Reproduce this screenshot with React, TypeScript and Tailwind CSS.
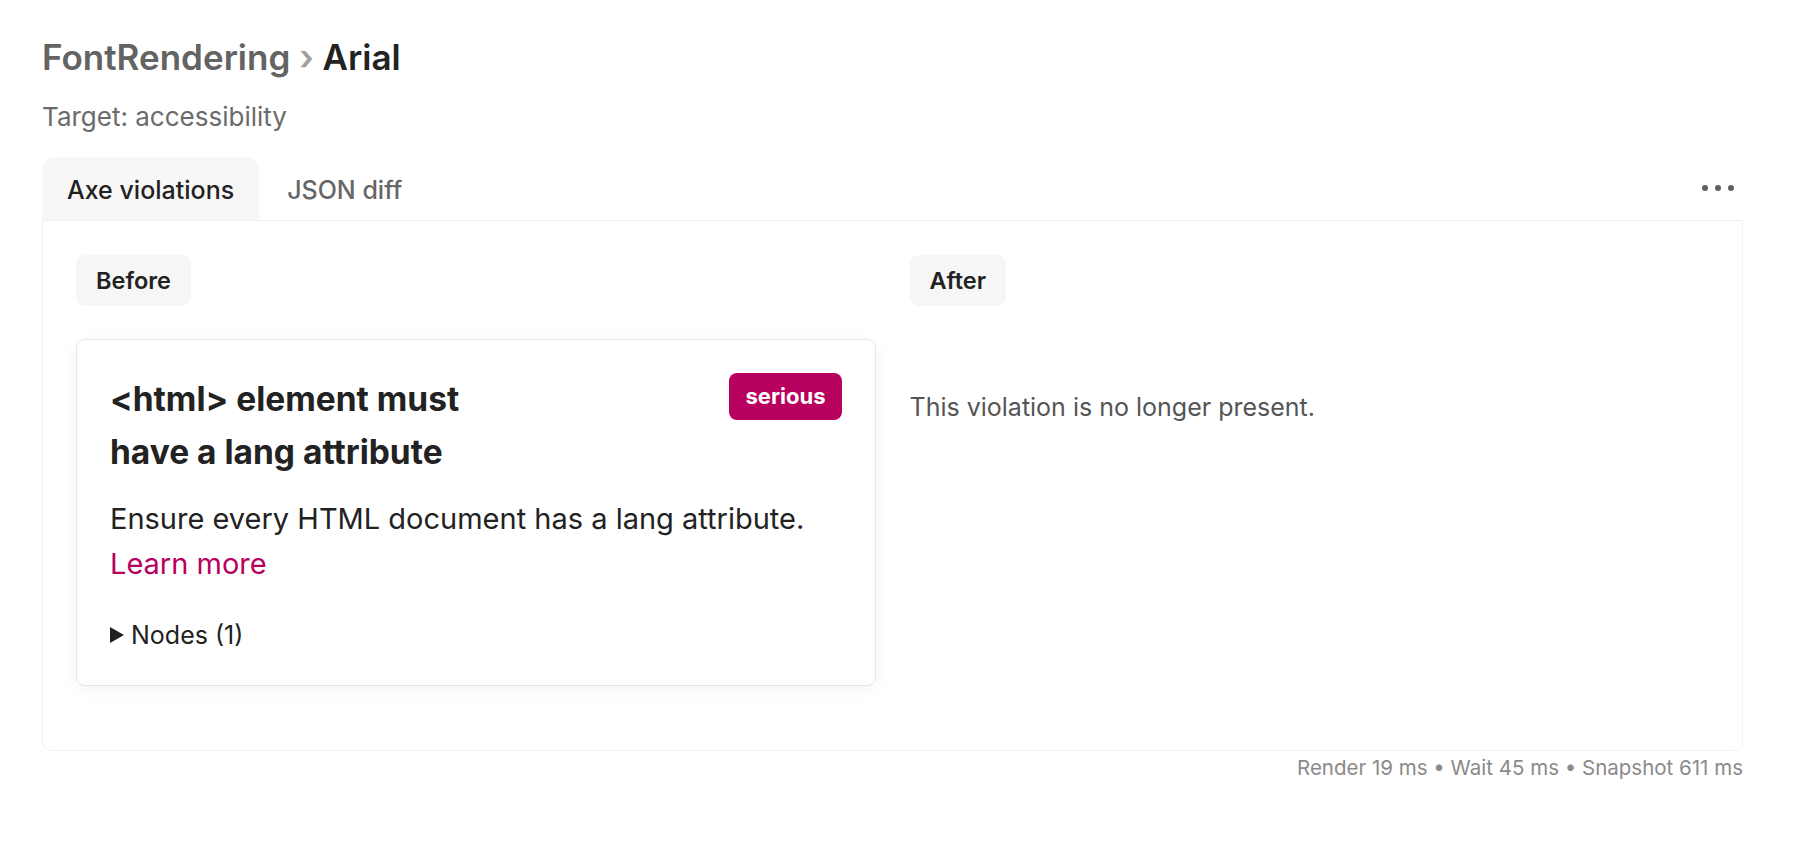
import { useState } from "react";

const tabs = ["Axe violations", "JSON diff"];

const Pill = ({ label }: { label: string }) => (
  <span className="inline-flex h-[51px] items-center rounded-[9px] bg-[#f6f6f6] px-[20px] text-[23.5px] font-semibold text-[#222]">
    {label}
  </span>
);

const ViolationCard = () => (
  <div className="rounded-[9px] border border-[#e6e6e6] bg-white px-[33px] pb-[33px] pt-[33px] shadow-[0_4px_16px_rgba(0,0,0,0.05)]">
    <div className="flex items-start justify-between gap-6">
      <h3 className="max-w-[400px] text-[33.5px] font-bold leading-[53px] text-[#222]">
        &lt;html&gt; element must have a lang attribute
      </h3>
      <span className="flex h-[47px] items-center rounded-[8px] bg-[#b8005f] px-[16px] text-[22px] font-bold text-white">
        serious
      </span>
    </div>
    <p className="mt-[17px] text-[29px] leading-[45px] text-[#222]">
      Ensure every HTML document has a lang attribute.
      <br />
      <a href="#" className="text-[#b8005f]">
        Learn more
      </a>
    </p>
    <div className="mt-[32px] flex items-center gap-[7px] text-[25px] leading-[34px] text-[#222]">
      <svg width="14" height="16" viewBox="0 0 14 16" className="shrink-0">
        <path d="M0 0 L14 8 L0 16 Z" fill="#1f1f1f" />
      </svg>
      <span>Nodes (1)</span>
    </div>
  </div>
);

export default function App() {
  const [active, setActive] = useState(0);

  return (
    <div className="min-h-screen bg-white pl-[42px] pr-[57px] pt-[35px] font-['Inter',sans-serif]">
      <h1 className="text-[35px] font-semibold leading-[44px]">
        <span className="text-[#636363]">FontRendering</span>
        <span className="text-[#a0a0a0]"> › </span>
        <span className="text-[#222]">Arial</span>
      </h1>
      <p className="mt-[23px] text-[26px] leading-[30px] text-[#6b6b6b]">Target: accessibility</p>

      <div className="mt-[25px] flex items-end justify-between">
        <div className="flex gap-[3px]">
          {tabs.map((t, i) => (
            <button
              key={t}
              onClick={() => setActive(i)}
              className={
                i === active
                  ? "h-[63px] rounded-t-[12px] bg-[#f7f7f7] px-[25px] pt-[4px] text-[25px] font-medium text-[#222]"
                  : "h-[63px] rounded-t-[12px] px-[25px] pt-[4px] text-[25px] font-medium text-[#666]"
              }
            >
              {t}
            </button>
          ))}
        </div>
        <button className="mb-[29px] mr-[7px] flex gap-[7px] px-[2px]">
          <span className="h-[6px] w-[6px] rounded-full bg-[#5f5f5f]" />
          <span className="h-[6px] w-[6px] rounded-full bg-[#5f5f5f]" />
          <span className="h-[6px] w-[6px] rounded-full bg-[#5f5f5f]" />
        </button>
      </div>

      <div className="rounded-b-[9px] border border-[#f0f0f0] px-[33px] pb-[64px] pt-[34px]">
        <div className="grid grid-cols-2 gap-[34px]">
          <div>
            <Pill label="Before" />
            <div className="mt-[33px]">
              <ViolationCard />
            </div>
          </div>
          <div>
            <Pill label="After" />
            <p className="mt-[84px] text-[25px] leading-[34px] text-[#555]">
              This violation is no longer present.
            </p>
          </div>
        </div>
      </div>

      <p className="mt-[5px] text-right text-[20.5px] leading-[24px] text-[#8a8a8a]">
        Render 19 ms • Wait 45 ms • Snapshot 611 ms
      </p>
    </div>
  );
}
